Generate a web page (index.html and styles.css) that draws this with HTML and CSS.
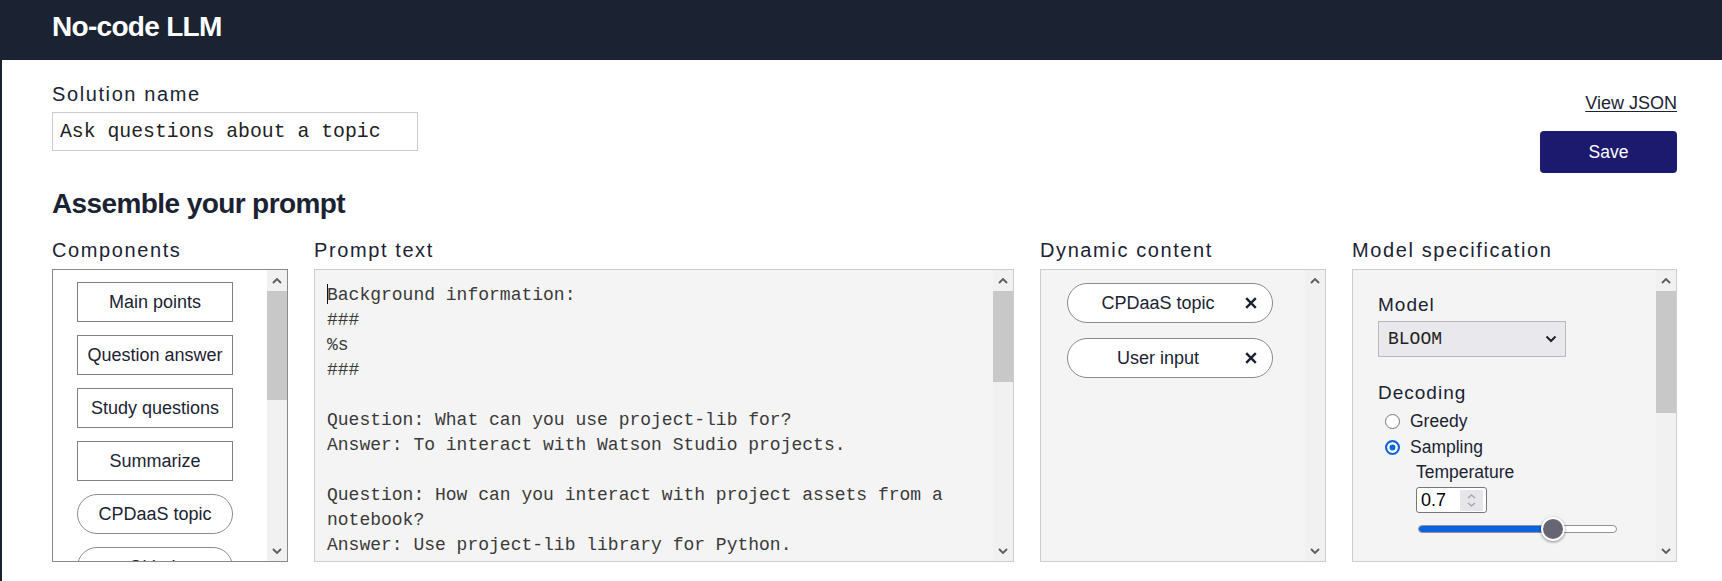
FILE: index.html
```html
<!DOCTYPE html>
<html lang="en">
<head>
<meta charset="utf-8">
<title>No-code LLM</title>
<link rel="stylesheet" href="styles.css">
</head>
<body>
<header class="topbar">
  <h1 class="app-title">No-code LLM</h1>
</header>
<main class="page">
  <section class="top-row">
    <div class="solution">
      <label class="field-label" for="solution-name">Solution name</label>
      <input id="solution-name" class="text-input" type="text" value="Ask questions about a topic">
    </div>
    <div class="actions">
      <a class="json-link" href="#">View JSON</a>
      <button class="save-btn" type="button">Save</button>
    </div>
  </section>

  <h2 class="section-title">Assemble your prompt</h2>

  <section class="columns">
    <div class="column">
      <div class="field-label">Components</div>
      <div class="panel panel-components">
        <div class="panel-body components-list">
          <div class="component">Main points</div>
          <div class="component">Question answer</div>
          <div class="component">Study questions</div>
          <div class="component">Summarize</div>
          <div class="component pill">CPDaaS topic</div>
          <div class="component pill">GitLab</div>
        </div>
        <div class="scrollbar">
          <div class="sb-btn"><svg width="10" height="6" viewBox="0 0 10 6"><polyline points="1,5 5,1 9,5"/></svg></div>
          <div class="sb-track"><div class="sb-thumb thumb-components"></div></div>
          <div class="sb-btn"><svg width="10" height="6" viewBox="0 0 10 6"><polyline points="1,1 5,5 9,1"/></svg></div>
        </div>
      </div>
    </div>

    <div class="column">
      <div class="field-label">Prompt text</div>
      <div class="panel panel-soft">
        <div class="panel-body prompt-text"><span class="caret"></span>Background information:
###
%s
###

Question: What can you use project-lib for?
Answer: To interact with Watson Studio projects.

Question: How can you interact with project assets from a notebook?
Answer: Use project-lib library for Python.</div>
        <div class="scrollbar">
          <div class="sb-btn"><svg width="10" height="6" viewBox="0 0 10 6"><polyline points="1,5 5,1 9,5"/></svg></div>
          <div class="sb-track"><div class="sb-thumb thumb-prompt"></div></div>
          <div class="sb-btn"><svg width="10" height="6" viewBox="0 0 10 6"><polyline points="1,1 5,5 9,1"/></svg></div>
        </div>
      </div>
    </div>

    <div class="column">
      <div class="field-label">Dynamic content</div>
      <div class="panel panel-soft">
        <div class="panel-body chips">
          <div class="chip"><span class="chip-text">CPDaaS topic</span><svg class="chip-x" width="12" height="12" viewBox="0 0 12 12"><path d="M1.2 1.2 L10.8 10.8 M10.8 1.2 L1.2 10.8"/></svg></div>
          <div class="chip"><span class="chip-text">User input</span><svg class="chip-x" width="12" height="12" viewBox="0 0 12 12"><path d="M1.2 1.2 L10.8 10.8 M10.8 1.2 L1.2 10.8"/></svg></div>
        </div>
        <div class="scrollbar">
          <div class="sb-btn"><svg width="10" height="6" viewBox="0 0 10 6"><polyline points="1,5 5,1 9,5"/></svg></div>
          <div class="sb-track"></div>
          <div class="sb-btn"><svg width="10" height="6" viewBox="0 0 10 6"><polyline points="1,1 5,5 9,1"/></svg></div>
        </div>
      </div>
    </div>

    <div class="column">
      <div class="field-label">Model specification</div>
      <div class="panel panel-soft">
        <div class="panel-body model-spec">
          <div class="sub-label">Model</div>
          <div class="select">
            <span class="select-value">BLOOM</span>
            <svg class="select-chevron" width="12" height="8" viewBox="0 0 12 8"><polyline points="1.5,1.5 6,6 10.5,1.5"/></svg>
          </div>
          <div class="sub-label decoding">Decoding</div>
          <div class="radio-group">
            <div class="radio-row"><span class="radio"></span><span>Greedy</span></div>
            <div class="radio-row"><span class="radio checked"></span><span>Sampling</span></div>
          </div>
          <div class="sampling-opts">
            <div class="temp-label">Temperature</div>
            <div class="number-input">
              <span class="number-value">0.7</span>
              <span class="spinner">
                <svg width="9" height="5" viewBox="0 0 9 5"><polyline points="1,4 4.5,1 8,4"/></svg>
                <svg width="9" height="5" viewBox="0 0 9 5"><polyline points="1,1 4.5,4 8,1"/></svg>
              </span>
            </div>
            <div class="slider">
              <div class="slider-track"><div class="slider-fill" style="width:70%"></div></div>
              <div class="slider-thumb" style="left:123px"></div>
            </div>
          </div>
        </div>
        <div class="scrollbar">
          <div class="sb-btn"><svg width="10" height="6" viewBox="0 0 10 6"><polyline points="1,5 5,1 9,5"/></svg></div>
          <div class="sb-track"><div class="sb-thumb thumb-model"></div></div>
          <div class="sb-btn"><svg width="10" height="6" viewBox="0 0 10 6"><polyline points="1,1 5,5 9,1"/></svg></div>
        </div>
      </div>
    </div>
  </section>
</main>
</body>
</html>
```

FILE: styles.css
```css
* {
  box-sizing: border-box;
}

html, body {
  height: 100%;
}

body {
  margin: 0;
  border-left: 2px solid #1b2333;
  background: #ffffff;
  color: #1b2333;
  font-family: "Liberation Sans", Arial, sans-serif;
  overflow: hidden;
}

/* ---------- header ---------- */
.topbar {
  height: 60px;
  background: #1b2333;
  padding-left: 50px;
}

.app-title {
  margin: 0;
  color: #ffffff;
  font-size: 28px;
  font-weight: 700;
  letter-spacing: -0.7px;
  line-height: 54px;
}

/* ---------- page ---------- */
.page {
  padding: 0 45px 0 50px;
}

.top-row {
  display: flex;
  justify-content: space-between;
  align-items: flex-start;
}

.solution {
  padding-top: 22px;
  display: flex;
  flex-direction: column;
}

.field-label {
  display: block;
  font-size: 20px;
  line-height: 24px;
  letter-spacing: 1.6px;
  color: #1b2333;
}

.solution .field-label {
  margin-bottom: 6px;
}

.text-input {
  width: 366px;
  height: 39px;
  border: 1px solid #cacaca;
  border-radius: 0;
  padding: 0 0 0 7px;
  margin: 0;
  font-family: "Liberation Mono", "Courier New", monospace;
  font-size: 19.8px;
  color: #222222;
  background: #ffffff;
  outline: none;
}

.actions {
  display: flex;
  flex-direction: column;
  align-items: flex-end;
  padding-top: 32px;
}

.json-link {
  font-size: 18px;
  line-height: 22px;
  color: #1b2333;
  text-decoration: underline;
  text-underline-offset: 2px;
}

.save-btn {
  margin-top: 17px;
  width: 137px;
  height: 42px;
  border: none;
  border-radius: 4px;
  background: #1b1a6e;
  color: #ffffff;
  font-family: "Liberation Sans", Arial, sans-serif;
  font-size: 17.5px;
  padding: 0;
}

.section-title {
  margin: 15px 0 0;
  font-size: 28px;
  line-height: 32px;
  font-weight: 700;
  letter-spacing: -0.6px;
  color: #1b2333;
}

/* ---------- columns ---------- */
.columns {
  display: grid;
  grid-template-columns: 236px 700px 286px 325px;
  column-gap: 26px;
  margin-top: 18px;
}

.column .field-label {
  margin-bottom: 7px;
}

.panel {
  height: 293px;
  display: flex;
  border: 1px solid #cdcdcd;
  background: #f4f4f4;
}

.panel-components {
  border-color: #8a8a8a;
  background: #ffffff;
}

.panel-body {
  flex: 1;
  min-width: 0;
  overflow: hidden;
}

/* scrollbar */
.scrollbar {
  width: 20px;
  display: flex;
  flex-direction: column;
  background: #f1f1f1;
}

.sb-btn {
  height: 21px;
  display: flex;
  align-items: center;
  justify-content: center;
}

.sb-btn svg polyline {
  fill: none;
  stroke: #5c5c5c;
  stroke-width: 1.8;
}

.sb-track {
  flex: 1;
}

.sb-thumb {
  background: #c8c8c8;
}

.thumb-components { height: 109px; }
.thumb-prompt { height: 91px; }
.thumb-model { height: 122px; }

/* components */
.components-list {
  padding: 12px 0 0 24px;
}

.component {
  width: 156px;
  height: 40px;
  margin-bottom: 13px;
  border: 1px solid #808080;
  display: flex;
  align-items: center;
  justify-content: center;
  font-size: 18px;
  color: #1b2333;
  white-space: nowrap;
}

.component.pill {
  border-radius: 20px;
  border-color: #8c8c8c;
}

/* prompt text */
.prompt-text {
  padding: 13px 12px 0 12px;
  font-family: "Liberation Mono", "Courier New", monospace;
  font-size: 18px;
  line-height: 25px;
  color: #3a3a3a;
  white-space: pre-wrap;
}

.caret {
  display: inline-block;
  width: 0;
  height: 20px;
  border-left: 1px solid #111111;
  vertical-align: -4px;
  margin-right: -1px;
}

/* chips */
.chips {
  padding: 13px 0 0 26px;
}

.chip {
  width: 206px;
  height: 40px;
  margin-bottom: 15px;
  display: flex;
  align-items: center;
  border: 1px solid #8a8a8a;
  border-radius: 20px;
  background: #ffffff;
  padding: 0 15px 0 5px;
}

.chip-text {
  flex: 1;
  text-align: center;
  font-size: 18px;
  color: #1b2333;
}

.chip-x {
  margin-left: 2px;
}

.chip-x path {
  stroke: #1b2333;
  stroke-width: 2.4;
  fill: none;
}

/* model spec */
.model-spec {
  padding: 24px 0 0 25px;
}

.sub-label {
  font-size: 19px;
  line-height: 22px;
  letter-spacing: 1px;
  color: #1b2333;
}

.sub-label + .select {
  margin-top: 5px;
}

.select {
  width: 188px;
  height: 36px;
  border: 1px solid #b8b8b8;
  background: #e9e9ed;
  display: flex;
  align-items: center;
  justify-content: space-between;
  padding: 0 8px 0 9px;
}

.select-value {
  font-family: "Liberation Mono", "Courier New", monospace;
  font-size: 18px;
  color: #222222;
}

.select-chevron polyline {
  fill: none;
  stroke: #222222;
  stroke-width: 2;
}

.sub-label.decoding {
  margin-top: 25px;
}

.radio-group {
  padding-top: 4px;
}

.radio-row {
  height: 26.6px;
  display: flex;
  align-items: center;
  padding-left: 7px;
  font-size: 17.5px;
  color: #1b2333;
}

.radio {
  width: 15px;
  height: 15px;
  border-radius: 50%;
  border: 1px solid #767676;
  background: #ffffff;
  margin-right: 10px;
  flex: none;
}

.radio.checked {
  border: 2px solid #0b63de;
  box-shadow: inset 0 0 0 2.5px #ffffff;
  background: #0b63de;
}

.sampling-opts {
  padding-left: 38px;
}

.temp-label {
  font-size: 17.5px;
  line-height: 22px;
  color: #1b2333;
}

.number-input {
  margin-top: 4px;
  width: 71px;
  height: 26px;
  border: 1px solid #767676;
  border-radius: 3px;
  background: #ffffff;
  display: flex;
  align-items: center;
  justify-content: space-between;
  padding: 0 3px 0 4px;
}

.number-value {
  font-size: 18px;
  color: #000000;
}

.spinner {
  width: 23px;
  height: 21px;
  background: #e6e6ea;
  display: flex;
  flex-direction: column;
  align-items: center;
  justify-content: center;
  gap: 3px;
}

.spinner polyline {
  fill: none;
  stroke: #a0a0a8;
  stroke-width: 1.3;
}

.slider {
  position: relative;
  margin-top: 4px;
  margin-left: 2px;
  width: 199px;
  height: 24px;
}

.slider-track {
  position: absolute;
  left: 0;
  right: 0;
  top: 8px;
  height: 8px;
  border: 1px solid #8f8f9d;
  border-radius: 4px;
  background: #ffffff;
  overflow: hidden;
}

.slider-fill {
  height: 100%;
  background: #0b63de;
}

.slider-thumb {
  position: absolute;
  top: 0;
  width: 24px;
  height: 24px;
  border-radius: 50%;
  background: #656574;
  border: 2px solid #ffffff;
  box-shadow: 0 1px 3px rgba(0, 0, 0, 0.45);
}
```
